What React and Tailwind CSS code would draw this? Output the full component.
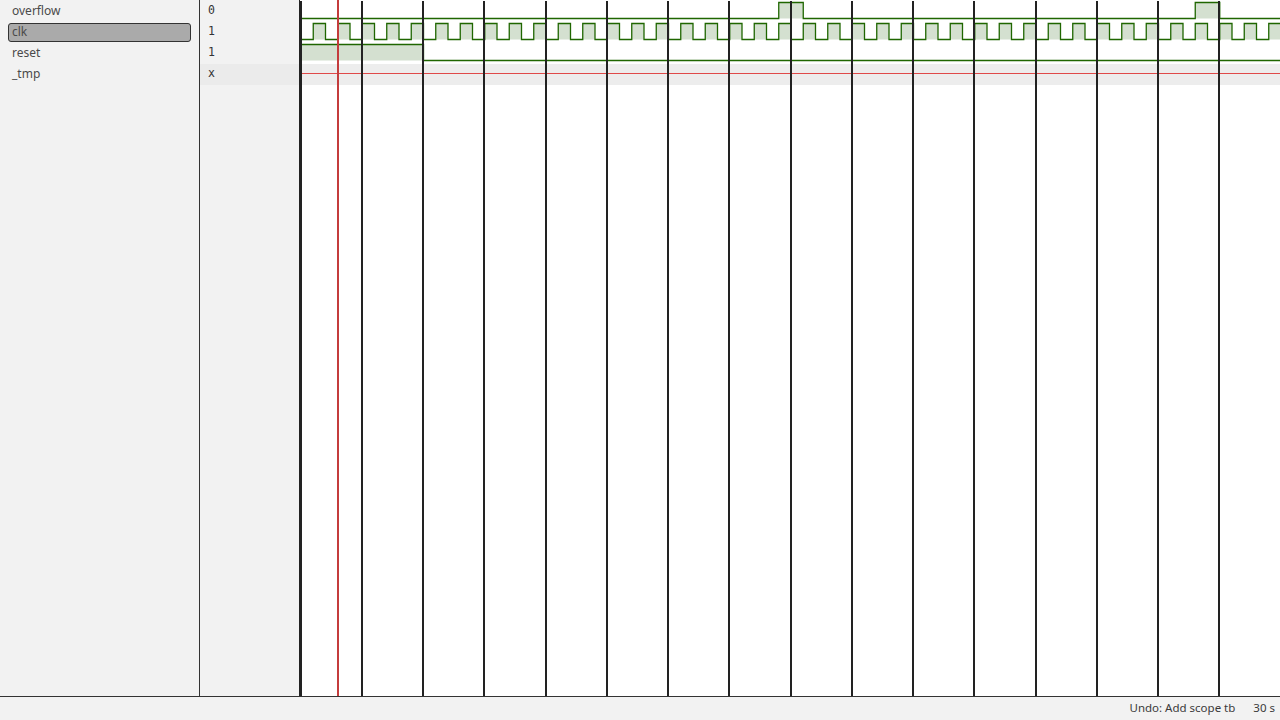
import React from 'react'

const signals = [
  { name: 'overflow', value: '0' },
  { name: 'clk', value: '1', selected: true },
  { name: 'reset', value: '1' },
  { name: '_tmp', value: 'x', hilite: true },
]

const SCALE = 2.45
const X0 = 1
const tx = (t) => X0 + t * SCALE
const W = 980
const H = 696
const LINE = '#1f6600'
const FILL = '#d4e0d0'

const buildWave = (highs, yHi, yLo, tEnd) => {
  let d = `M ${X0} ${yLo}`
  highs.forEach(([a, b]) => {
    d += ` L ${tx(a)} ${yLo} L ${tx(a)} ${yHi} L ${tx(b)} ${yHi} L ${tx(b)} ${yLo}`
  })
  d += ` L ${tx(tEnd)} ${yLo}`
  return d
}

const clkHighs = []
for (let k = 0; k < 40; k++) clkHighs.push([10 * k + 5, 10 * k + 10])
const overflowHighs = [[195, 205], [365, 375]]

const Waves = () => {
  const grid = []
  for (let k = 0; k < 16; k++) grid.push(tx(25 * k))

  const resetPath = `M ${X0} 44.5 L ${tx(50)} 44.5 L ${tx(50)} 60.5 L ${tx(400)} 60.5`

  return (
    <svg width={W} height={H} className="block">
      <rect x="0" y="64" width={W} height="21" fill="#ededed" />

      {/* fills */}
      {overflowHighs.map(([a, b], i) => (
        <rect key={'of' + i} x={tx(a)} y="2.5" width={tx(b) - tx(a)} height="16" fill={FILL} />
      ))}
      {clkHighs.map(([a, b], i) => (
        <rect key={'cf' + i} x={tx(a)} y="23.5" width={tx(b) - tx(a)} height="16" fill={FILL} />
      ))}
      <rect x={X0} y="44.5" width={tx(50) - X0} height="16" fill={FILL} />

      {/* lines */}
      <path d={buildWave(overflowHighs, 2.5, 18.5, 400)} fill="none" stroke={LINE} strokeWidth="1.3" />
      <path d={buildWave(clkHighs, 23.5, 39.5, 400)} fill="none" stroke={LINE} strokeWidth="1.3" />
      <path d={resetPath} fill="none" stroke={LINE} strokeWidth="1.3" />
      <line x1={X0} y1="73.5" x2={W} y2="73.5" stroke="#e04a4a" strokeWidth="1" />

      {/* grid */}
      {grid.map((x, i) => (
        <rect key={'g' + i} x={i === 0 ? 0 : Math.floor(x) - 1} y="1" width="2" height={H - 1} fill="#222" />
      ))}

      {/* cursor */}
      <rect x={Math.round(tx(15)) - 1} y="0" width="2" height={H} fill="#c43c3c" />
    </svg>
  )
}

export default function App() {
  return (
    <div className="w-[1280px] h-[720px] flex flex-col bg-[#f2f2f2] overflow-hidden" style={{ fontFamily: '"Noto Sans", "Open Sans", sans-serif' }}>
      <div className="flex flex-1 min-h-0">
        <div className="w-[200px] border-r border-[#333] pt-[1px] text-[12px] text-[#4a4a4a]">
          {signals.map((s) => (
            <div key={s.name} className="h-[21px] flex">
              {s.selected ? (
                <div className="mx-2 my-[1px] flex-1 flex items-center pl-[3px] pb-[2px] bg-[#aaaaaa] border border-[#333] rounded-[3px]">
                  {s.name}
                </div>
              ) : (
                <div className="pl-3 pb-[2px] flex items-center">{s.name}</div>
              )}
            </div>
          ))}
        </div>

        <div className="w-[100px] border-r border-[#222] pt-[1px] text-[11.5px] text-[#333]" style={{ fontFamily: '"DejaVu Sans Mono", monospace' }}>
          {signals.map((s) => (
            <div key={s.name} className={'h-[21px] flex items-center pl-2 pb-[2px] ' + (s.hilite ? 'bg-[#ebebeb]' : '')}>
              {s.value}
            </div>
          ))}
        </div>

        <div className="flex-1 bg-white overflow-hidden">
          <Waves />
        </div>
      </div>

      <div className="h-[24px] border-t border-[#333] flex items-center justify-end gap-[18px] pr-[5px] pb-[1px] text-[11.5px] text-[#3a3a3a]">
        <span>Undo: Add scope tb</span>
        <span>30 s</span>
      </div>
    </div>
  )
}
